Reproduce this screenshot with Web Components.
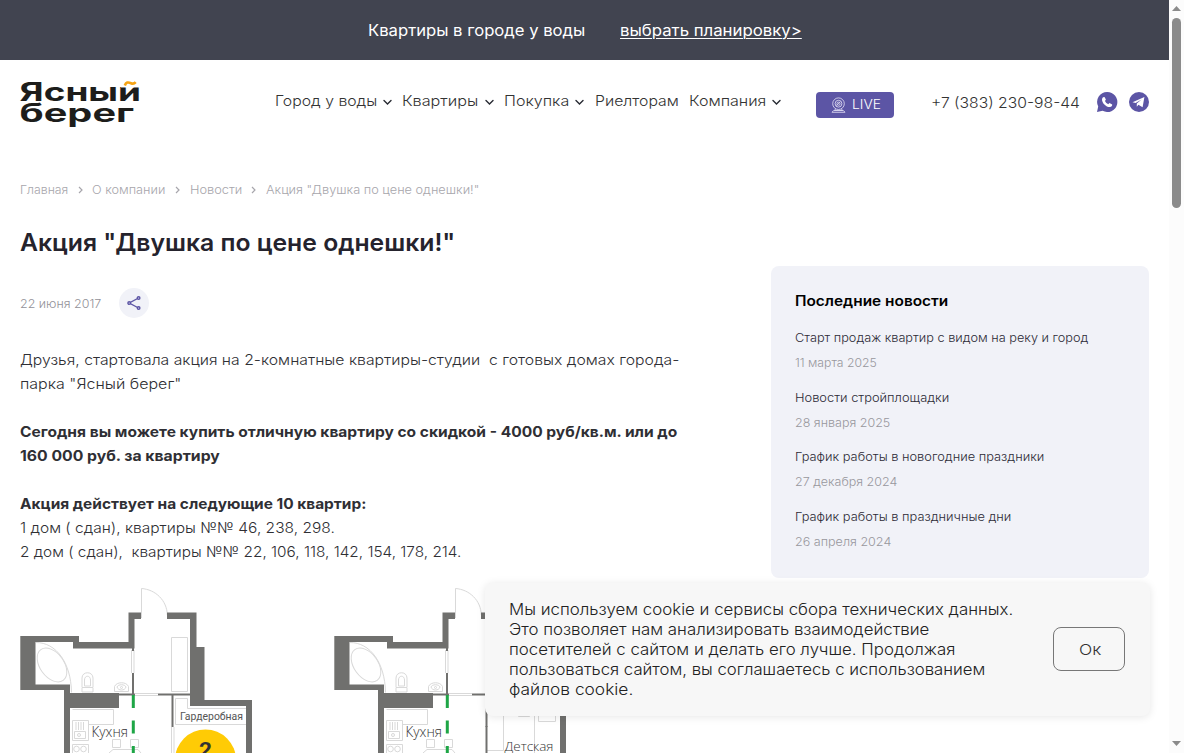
<!DOCTYPE html>
<html lang="ru">
<head>
<meta charset="utf-8">
<title>Акция "Двушка по цене однешки!"</title>
<style>
html,body{margin:0;height:100%;overflow:hidden;background:#fff}
body{font-family:Inter,"Open Sans","Liberation Sans",sans-serif;color:#333;font-weight:360}
</style>
</head>
<body>
<berega-app></berega-app>
<script>
const element = (name, markup) => {
  const t = document.createElement('template');
  customElements.define(name, class extends HTMLElement {
    constructor() {
      super();
      t.innerHTML = typeof markup === 'function' ? markup(this) : markup;
      this.attachShadow({mode: 'open'}).append(t.content.cloneNode(true));
    }
  });
};

element('berega-app', `
<style>
:host{display:flex;width:1184px;height:753px;overflow:hidden;position:relative}
.page{width:1169px;flex:none;height:753px;overflow:hidden}
.columns{display:grid;grid-template-columns:692px 378px;column-gap:59px;padding:0 20px}
news-list{margin-top:36px}
cookie-notice{position:absolute;left:485px;top:583px}
</style>
<div class="page">
  <promo-bar></promo-bar>
  <site-header></site-header>
  <bread-crumbs></bread-crumbs>
  <div class="columns"><news-article></news-article><news-list></news-list></div>
</div>
<scroll-track></scroll-track>
<cookie-notice></cookie-notice>`);

element('promo-bar', `
<style>
:host{display:flex;height:60px;background:#414450;color:#fff;font-size:16px;font-weight:400;line-height:60px;padding-left:367.500px;gap:35px}
a{text-decoration:underline;text-underline-offset:2px;text-decoration-thickness:1px}
</style>
<fit-text w="218">Квартиры в городе у воды</fit-text><a><fit-text w="182.500">выбрать планировку&gt;</fit-text></a>`);

element('site-header', `
<style>
:host{display:flex;height:82px;padding-left:20px;align-items:flex-start}
site-logo{margin-top:20px}
nav{display:flex;margin:30px 0 0 133.500px;font-size:14.5px;line-height:22px;width:507.500px;gap:10.500px;font-weight:350}
.live{display:flex;align-items:center;box-sizing:border-box;width:78px;height:26px;margin:32px 0 0 34px;padding-left:15px;background:#5c55a5;border-radius:4px;color:#fff;font-size:12.5px;gap:6px}
.live fit-text{margin-top:-2px}
.phone{margin:31px 0 0 37px;font-size:14.5px;line-height:24px;font-weight:350}
.soc{margin:31px 0 0 16px;display:flex;gap:10px}
svg{display:block;flex:none}
</style>
<site-logo></site-logo>
<nav>
<nav-item more><fit-text w="103">Город у воды</fit-text></nav-item>
<nav-item more><fit-text w="77">Квартиры</fit-text></nav-item>
<nav-item more><fit-text w="66">Покупка</fit-text></nav-item>
<nav-item><fit-text w="84.500">Риелторам</fit-text></nav-item>
<nav-item more><fit-text w="78">Компания</fit-text></nav-item>
</nav>
<div class="live"><svg width="15" height="16" viewBox="0 0 15 16" fill="none" stroke="#d8d5ee" stroke-width=".9"><circle cx="7.5" cy="6.7" r="5.8"/><circle cx="7.5" cy="6.7" r="3.4"/><circle cx="7.5" cy="6.7" r="1.6"/><path d="M9.3 4.7l-4 4M4.5 12l-1 1.5h8l-1-1.5M1 15.3h13l-1.5-1.7h-10z"/></svg><fit-text w="29.700">LIVE</fit-text></div>
<div class="phone"><fit-text w="149.700">+7 (383) 230-98-44</fit-text></div>
<div class="soc">
<svg width="22" height="22" viewBox="0 0 22 22"><path d="M11.2 1a10 10 0 1 1-4.6 18.8L1 21l1.2-5.4A10 10 0 0 1 11.2 1z" fill="#5c55a5"/><path d="M7 6.3l1.5-.4 1.4 2.7-.9 1.4c.7 1.5 1.7 2.5 3.2 3.2l1.3-1.1 2.7 1.4c.1 1.4-.8 2.5-2.3 2.6-3.8.1-8-4.2-7.9-7.6.1-1 .4-1.7 1-2.2z" fill="#fff"/></svg>
<svg width="22" height="22" viewBox="0 0 22 22"><circle cx="11" cy="11" r="10" fill="#5c55a5"/><path d="M4.5 11.2L16.4 6l-1.8 10.2-4.2-2.4-1.6 2v-3.3l4.8-4-6 3.6z" fill="#fff"/></svg>
</div>`);

element('nav-item', host => `
<style>
:host{display:flex;align-items:center;gap:6px;flex:none}
svg{display:block;margin-top:2px}
:host(:not([more])) svg{display:none}
</style>
<slot></slot><svg width="9" height="7" viewBox="0 0 9 7" fill="none" stroke="#262a32" stroke-width="1.4" stroke-linecap="round"><path d="M1 1.5l3.5 3.4L8 1.5"/></svg>`);

element('site-logo', `
<style>:host{display:block;width:121px;height:50px}svg{display:block;overflow:visible}text{font:700 25px Inter,"Open Sans",sans-serif;fill:#1d1d1b}</style>
<svg width="121" height="50" viewBox="0 0 121 50">
<defs><clipPath id="c"><path d="M-2 0H101V7.400H123V24H-2z"/></clipPath></defs>
<g clip-path="url(#c)"><text x="-.500" y="20.600" textLength="121.500" lengthAdjust="spacingAndGlyphs">Ясный</text></g>
<text x="-.500" y="42.200" textLength="114.500" lengthAdjust="spacingAndGlyphs">берег</text>
<path d="M104.800 5.500C106 2.200 108 1.800 111 3.200c2 .9 3.300.6 4.700-1" fill="none" stroke="#f6a313" stroke-width="2.600"/>
</svg>`);

element('bread-crumbs', `
<style>
:host{display:flex;height:24px;padding:36px 0 28px 20px;color:#a7a6ac;font-size:12px;line-height:24px}
svg{display:block;margin:8px 9.500px 0 9.500px}
</style>
<fit-text w="49">Главная</fit-text><svg width="5" height="8" fill="none" stroke="#a7a6ac" stroke-width="1.2"><path d="M1 1l3 3-3 3"/></svg>
<fit-text w="74">О компании</fit-text><svg width="5" height="8" fill="none" stroke="#a7a6ac" stroke-width="1.2"><path d="M1 1l3 3-3 3"/></svg>
<fit-text w="53">Новости</fit-text><svg width="5" height="8" fill="none" stroke="#a7a6ac" stroke-width="1.2"><path d="M1 1l3 3-3 3"/></svg>
<fit-text w="214">Акция "Двушка по цене однешки!"</fit-text>`);

element('news-article', `
<style>
:host{display:block}
h1{margin:0;font-size:24px;line-height:26px;font-weight:580;color:#25232d}
.meta{display:flex;gap:17.700px;align-items:center;height:30px;margin-top:32px;font-size:12px;color:#929198}
.share{width:30px;height:30px;border-radius:50%;background:#f1f2f8;display:grid;place-items:center}
.text{margin-top:30px;font-size:14.5px;line-height:24px;color:#2f2f34}
.text div{height:24px}
b{font-weight:700}
.plans{display:flex;gap:34px;margin-top:24px}
</style>
<h1><fit-text w="436">Акция "Двушка по цене однешки!"</fit-text></h1>
<div class="meta"><fit-text w="82">22 июня 2017</fit-text><span class="share"><svg width="14" height="14" viewBox="0 0 14 14" fill="#f1f2f8" stroke="#5c55a5" stroke-width="1.4"><path d="M11.5 2L2.3 7l9.2 5"/><circle cx="11.6" cy="2" r="1.3"/><circle cx="2.2" cy="7" r="1.3"/><circle cx="11.6" cy="12" r="1.3"/></svg></span></div>
<div class="text">
<div><fit-text w="660">Друзья, стартовала акция на 2-комнатные квартиры-студии  с готовых домах города-</fit-text></div>
<div><fit-text w="162">парка "Ясный берег"</fit-text></div>
<div></div>
<div><b><fit-text w="658">Сегодня вы можете купить отличную квартиру со скидкой - 4000 руб/кв.м. или до</fit-text></b></div>
<div><b><fit-text w="200.500">160 000 руб. за квартиру</fit-text></b></div>
<div></div>
<div><b><fit-text w="347">Акция действует на следующие 10 квартир:</fit-text></b></div>
<div><fit-text w="315.500">1 дом ( сдан), квартиры №№ 46, 238, 298.</fit-text></div>
<div><fit-text w="442">2 дом ( сдан),  квартиры №№ 22, 106, 118, 142, 154, 178, 214.</fit-text></div>
</div>
<div class="plans"><floor-plan kind="a"></floor-plan><floor-plan kind="b"></floor-plan></div>`);

/* Plan drawing units are page pixels, the first plan starting at 20,588. */
element('floor-plan', host => `
<style>:host{display:block;width:280px;height:165px;flex:none}svg{display:block}text{font-family:"Open Sans","Noto Sans",sans-serif;font-weight:300;fill:#333}</style>
<svg width="280" height="165" viewBox="20 588 280 165">
<g fill="none" stroke="#d9d9d9" stroke-width="1">
<path d="M141.500 618V588.500c14 1 25.500 12 25.800 26.500M171.500 637.500h16v54h-16zM36 642.500c20 0 35 20 35.500 50"/>
<ellipse cx="52" cy="665" rx="12" ry="19" transform="rotate(-36 52 665)"/>
<path d="M82 687v-9c0-7 11-7 11 0v9M82 687.500h11v4.500H82zM84.500 686v-6c0-5 6-5 6 0v6zM114.500 691.500v-5c2-5 12-5 14 0v5zM117 687c1-3 8-3 9 0-1 4-8 4-9 0z"/>
<circle cx="121.500" cy="687.500" r="1"/>
<path d="M72.500 709.500h41v15H88.500M72.500 720.500h16v20h-16zM74.500 731.500h11v7h-11zM76 722v8M78.500 722v8M81 722v8M83.500 722v8M72.500 744.500h16V760h-16zM112.500 739.500h8v8h-8zM130.500 739.500h8v8h-8zM109 753l4-3.500h25l3 3.500"/>
<circle cx="76.500" cy="749" r="2.800"/><circle cx="83.500" cy="749" r="2.800"/><circle cx="79" cy="735" r="1.500"/>
<path d="M131.500 650v23M134 650v23M135 693.500h23M135 695.500h23"/>
${host.getAttribute('kind') === 'a' ? '<path d="M175.500 698.500h12v10h59M175.500 698.500v26H246M171.500 727v26M174 727v26"/>' : '<path d="M189.500 700v50.500H173M220.500 700v53M204.500 710v6.500h11V710M224.500 710v11.500h17V710z"/>'}
</g>
<g fill="#70706e">
<path d="M20.300 636H79v6h49.500v-29.500H141V619h-6.500v29.500H73V642H35.500v42.500H70v8.500h49v15H70v50h-6v-68H20.300z"/>
<path d="M167 612.500h29.500V647h8v53H252v60h-6v-54H190V619h-23zM132 648h2v3h-2zM132 673h2v21h-2zM119 693.500h16v2h-16zM158 693.500h33v2h-33zM171.500 695h2v32h-2z"/>
${host.getAttribute('kind') === 'b' ? '<path d="M171.500 726h2v30h-2z"/>' : ''}
</g>
<path d="M133.300 695v58" stroke="#1ea646" stroke-width="3" stroke-dasharray="13 12.500"/>
<text x="91.500" y="736.500" font-size="14" textLength="36.500" lengthAdjust="spacingAndGlyphs">Кухня</text>
${host.getAttribute('kind') === 'a' ? '<text x="180" y="720" font-size="10" textLength="63" lengthAdjust="spacingAndGlyphs" style="font-weight:400;font-family:Roboto;fill:#555">Гардеробная</text><circle cx="205.500" cy="760" r="30.500" fill="#ffcb05"/><text x="199" y="757" font-size="20.500" style="font-weight:700;font-family:Roboto" textLength="13" lengthAdjust="spacingAndGlyphs">2</text>' : '<text x="190.500" y="751" font-size="13.500" textLength="49" lengthAdjust="spacingAndGlyphs">Детская</text>'}
</svg>`);

element('news-list', `
<style>
:host{display:block;box-sizing:border-box;height:312px;width:378px;background:#f1f2f8;border-radius:8px;padding:24px 24px}
h2{margin:0 0 16px;font-size:14px;line-height:22px;font-weight:600;color:#000}
</style>
<h2><fit-text w="154">Последние новости</fit-text></h2>
<news-item><fit-text w="294">Старт продаж квартир с видом на реку и город</fit-text><fit-text slot="date" w="82.500">11 марта 2025</fit-text></news-item>
<news-item><fit-text w="155">Новости стройплощадки</fit-text><fit-text slot="date" w="96">28 января 2025</fit-text></news-item>
<news-item><fit-text w="250">График работы в новогодние праздники</fit-text><fit-text slot="date" w="103">27 декабря 2024</fit-text></news-item>
<news-item><fit-text w="217">График работы в праздничные дни</fit-text><fit-text slot="date" w="97">26 апреля 2024</fit-text></news-item>`);

element('news-item', `
<style>
:host{display:block;height:59.700px;font-size:12px;line-height:20px;color:#2c2a36}
div{height:20px}.d{margin-top:5px;color:#98979d}
</style>
<div><slot></slot></div><div class="d"><slot name="date"></slot></div>`);

element('cookie-notice', `
<style>
:host{display:flex;box-sizing:border-box;width:665px;height:133px;padding:17px 25px 0 24px;background:#f7f7f7;border-radius:8px;box-shadow:0 1px 8px rgba(0,0,0,.1);justify-content:space-between;color:#222}
.t{font-size:15.500px;line-height:20px}.t div{height:20px}
button{box-sizing:border-box;width:72px;height:44px;margin-top:27px;border:1px solid #777;border-radius:8px;background:#f7f7f7;font:300 15px Inter,sans-serif;color:#333;padding:0}
</style>
<div class="t">
<div><fit-text w="505">Мы используем cookie и сервисы сбора технических данных.</fit-text></div>
<div><fit-text w="421">Это позволяет нам анализировать взаимодействие</fit-text></div>
<div><fit-text w="447">посетителей с сайтом и делать его лучше. Продолжая</fit-text></div>
<div><fit-text w="477">пользоваться сайтом, вы соглашаетесь с использованием</fit-text></div>
<div><fit-text w="125">файлов cookie.</fit-text></div>
</div>
<button><fit-text w="23">Ок</fit-text></button>`);

element('scroll-track', `
<style>
:host{display:flex;flex-direction:column;align-items:center;width:15px;height:753px;background:#fcfcfc}
i{width:9px;height:190px;background:#8b8b8b;border-radius:5px;margin-top:7px}
svg{display:block;margin-top:6px}svg+i+svg{margin-top:auto;margin-bottom:7px}
</style>
<svg width="9" height="5" fill="#8b8b8b"><path d="M0 5L4.500 0 9 5z"/></svg><i></i><svg width="9" height="5" fill="#8b8b8b"><path d="M0 0L4.500 5 9 0z"/></svg>`);

customElements.define('fit-text', class extends HTMLElement {
  constructor() {
    super();
    this.attachShadow({mode: 'open'}).innerHTML = '<style>:host{display:inline-block;white-space:pre;vertical-align:top;text-decoration:inherit}span{display:inline-block;vertical-align:top;transform-origin:0 0;text-decoration:inherit}</style><span><slot></slot></span>';
  }
  connectedCallback() {
    const span = this.shadowRoot.querySelector('span');
    const target = this.getAttribute('w') - 0.7;
    const natural = span.getBoundingClientRect().width;
    this.style.width = target + 'px';
    span.style.transform = 'scaleX(' + target / natural + ')';
  }
});
</script>
</body>
</html>
